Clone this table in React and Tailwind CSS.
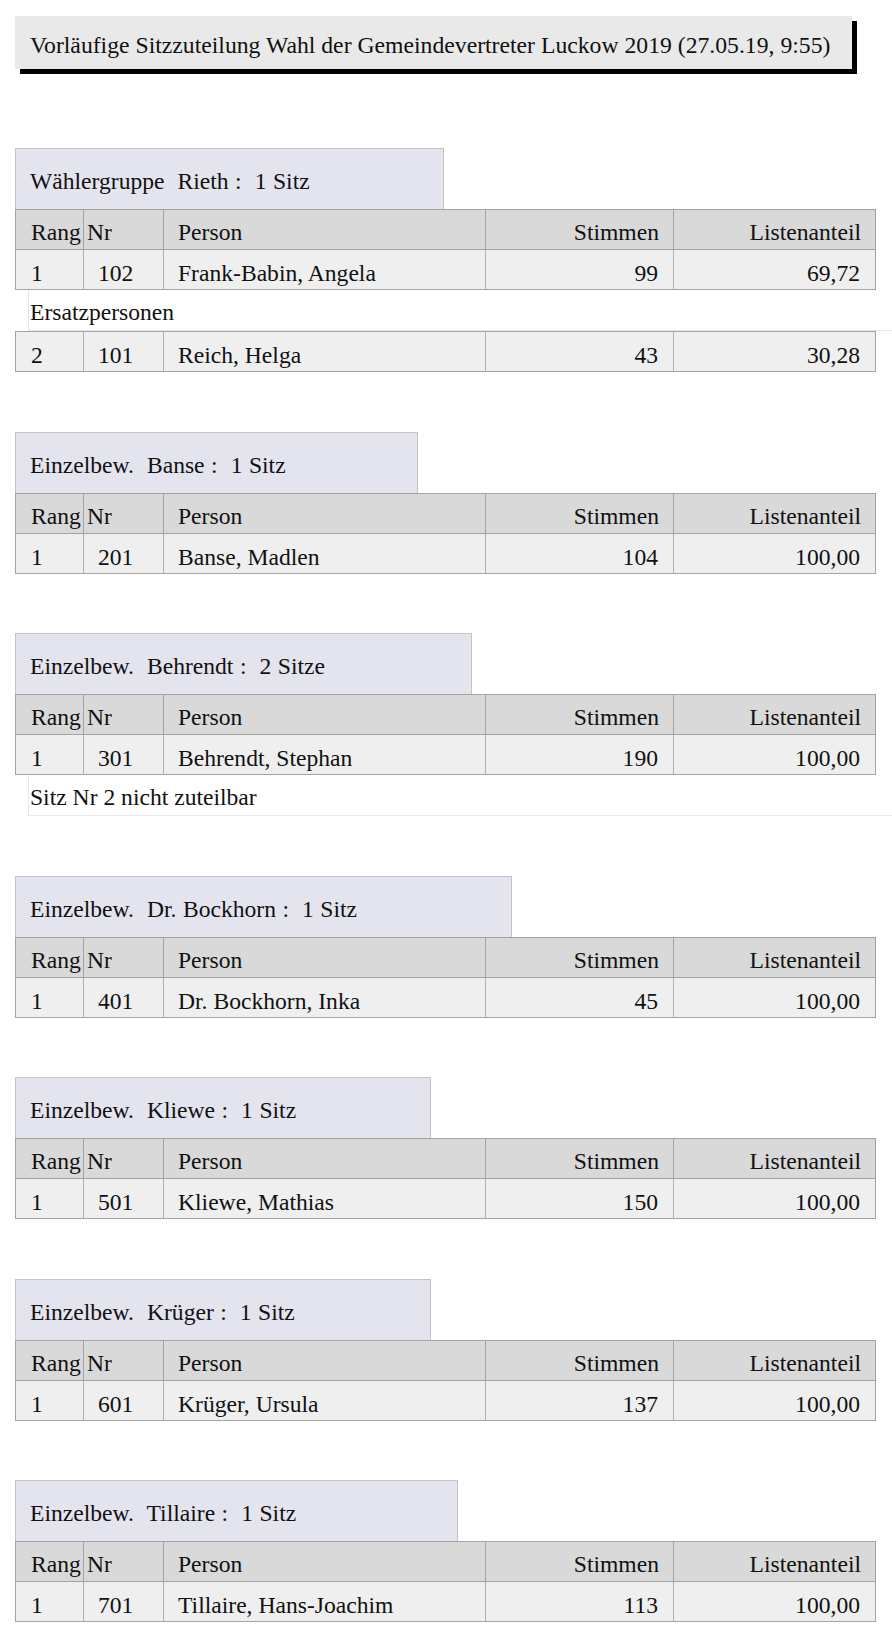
import React from 'react';

const groups = [
  {
    title: 'Wählergruppe  Rieth :  1 Sitz',
    width: 'w-[429px]',
    rows: [['1', '102', 'Frank-Babin, Angela', '99', '69,72']],
    spare: [['2', '101', 'Reich, Helga', '43', '30,28']],
  },
  {
    title: 'Einzelbew.  Banse :  1 Sitz',
    width: 'w-[403px]',
    rows: [['1', '201', 'Banse, Madlen', '104', '100,00']],
  },
  {
    title: 'Einzelbew.  Behrendt :  2 Sitze',
    width: 'w-[457px]',
    rows: [['1', '301', 'Behrendt, Stephan', '190', '100,00']],
    note: 'Sitz Nr 2 nicht zuteilbar',
  },
  {
    title: 'Einzelbew.  Dr. Bockhorn :  1 Sitz',
    width: 'w-[497px]',
    rows: [['1', '401', 'Dr. Bockhorn, Inka', '45', '100,00']],
  },
  {
    title: 'Einzelbew.  Kliewe :  1 Sitz',
    width: 'w-[416px]',
    rows: [['1', '501', 'Kliewe, Mathias', '150', '100,00']],
  },
  {
    title: 'Einzelbew.  Krüger :  1 Sitz',
    width: 'w-[416px]',
    rows: [['1', '601', 'Krüger, Ursula', '137', '100,00']],
  },
  {
    title: 'Einzelbew.  Tillaire :  1 Sitz',
    width: 'w-[443px]',
    rows: [['1', '701', 'Tillaire, Hans-Joachim', '113', '100,00']],
  },
];

const HeadRow = () => (
  <div className="flex h-[41px] w-[861px] border-l border-t border-b border-[#a3a3a3] bg-[#d9d9d9]">
    <div className="w-[68px] border-r border-[#a3a3a3] pl-[15px] pt-[9px]">Rang</div>
    <div className="w-[80px] border-r border-[#a3a3a3] pl-[3px] pt-[9px]">Nr</div>
    <div className="w-[322px] border-r border-[#a3a3a3] pl-[14px] pt-[9px]">Person</div>
    <div className="w-[188px] border-r border-[#a3a3a3] pr-[14px] pt-[9px] text-right">Stimmen</div>
    <div className="w-[202px] border-r border-[#a3a3a3] pr-[14px] pt-[9px] text-right">Listenanteil</div>
  </div>
);

const DataRow = ({ row }) => (
  <div className="flex h-[40px] w-[861px] border-l border-b border-[#a3a3a3] bg-[#efefef]">
    <div className="w-[68px] border-r border-[#b0b0b0] pl-[15px] pt-[10px]">{row[0]}</div>
    <div className="w-[80px] border-r border-[#b0b0b0] pl-[14px] pt-[10px]">{row[1]}</div>
    <div className="w-[322px] border-r border-[#b0b0b0] pl-[14px] pt-[10px]">{row[2]}</div>
    <div className="w-[188px] border-r border-[#b0b0b0] pr-[15px] pt-[10px] text-right">{row[3]}</div>
    <div className="w-[202px] border-r border-[#a3a3a3] pr-[15px] pt-[10px] text-right">{row[4]}</div>
  </div>
);

const Line = ({ children }) => (
  <div className="ml-[13px] w-[864px] h-[41px] border-l border-b border-[#e8e8e8] pl-[1px] pt-[9px]">
    {children}
  </div>
);

export default function App() {
  return (
    <div
      className="w-[892px] bg-white text-[#111] text-[23.6px] leading-[26px] pt-[16px] pb-[14px] pl-[15px]"
      style={{ fontFamily: '"Liberation Serif", "Times New Roman", Times, serif' }}
    >
      <div className="w-[837px] h-[53px] bg-[#e9e9e9] shadow-[5px_5px_0_#000] pl-[15px] pt-[16px] text-[23.7px] whitespace-nowrap">
        Vorläufige Sitzzuteilung Wahl der Gemeindevertreter Luckow 2019 (27.05.19, 9:55)
      </div>

      <div className="flex flex-col gap-[59.5px] mt-[79px]">
        {groups.map((g) => (
          <div key={g.title}>
            <div className={`${g.width} h-[61px] bg-[#e4e4ee] border-t border-l border-r border-[#c4c4c8] pl-[14px] pt-[19px] whitespace-pre [word-spacing:0.6px]`}>
              {g.title}
            </div>
            <HeadRow />
            {g.rows.map((r) => (
              <DataRow key={r[1]} row={r} />
            ))}
            {g.spare && (
              <>
                <Line>Ersatzpersonen</Line>
                {g.spare.map((r) => (
                  <div key={r[1]} className="border-t border-[#a3a3a3] w-[861px]">
                    <DataRow row={r} />
                  </div>
                ))}
              </>
            )}
            {g.note && <Line>{g.note}</Line>}
          </div>
        ))}
      </div>
    </div>
  );
}
